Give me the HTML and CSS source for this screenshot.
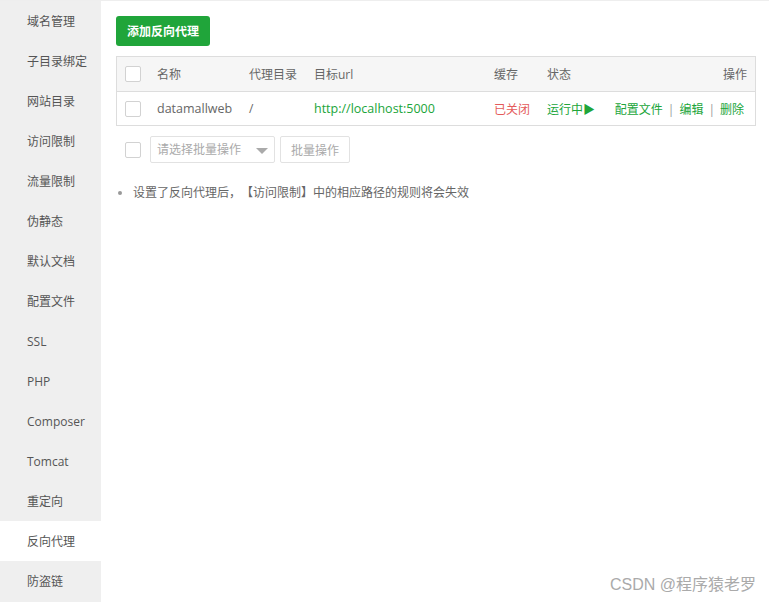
FILE: index.html
```html
<!DOCTYPE html>
<html lang="zh-CN">
<head>
<meta charset="utf-8">
<title>反向代理</title>
<link rel="stylesheet" href="styles.css">
</head>
<body>
<div class="page">
  <ul class="side">
    <li class="side-item">域名管理</li>
    <li class="side-item">子目录绑定</li>
    <li class="side-item">网站目录</li>
    <li class="side-item">访问限制</li>
    <li class="side-item">流量限制</li>
    <li class="side-item">伪静态</li>
    <li class="side-item">默认文档</li>
    <li class="side-item">配置文件</li>
    <li class="side-item">SSL</li>
    <li class="side-item">PHP</li>
    <li class="side-item">Composer</li>
    <li class="side-item">Tomcat</li>
    <li class="side-item">重定向</li>
    <li class="side-item active">反向代理</li>
    <li class="side-item">防盗链</li>
  </ul>
  <div class="main">
    <button class="btn-add">添加反向代理</button>
    <div class="table">
      <div class="row head">
        <div class="cell cb-cell"><span class="cb"></span></div>
        <div class="cell">名称</div>
        <div class="cell">代理目录</div>
        <div class="cell">目标url</div>
        <div class="cell">缓存</div>
        <div class="cell">状态</div>
        <div class="cell ops">操作</div>
      </div>
      <div class="row body">
        <div class="cell cb-cell"><span class="cb"></span></div>
        <div class="cell name">datamallweb</div>
        <div class="cell">/</div>
        <div class="cell green url">http://localhost:5000</div>
        <div class="cell red">已关闭</div>
        <div class="cell green">运行中▶</div>
        <div class="cell ops body-ops green">配置文件<span class="sep">|</span>编辑<span class="sep">|</span>删除</div>
      </div>
    </div>
    <div class="batch">
      <span class="cb"></span>
      <div class="select">请选择批量操作<span class="arrow"></span></div>
      <button class="btn-batch">批量操作</button>
    </div>
    <ul class="notes">
      <li>设置了反向代理后，【访问限制】中的相应路径的规则将会失效</li>
    </ul>
  </div>
  <div class="watermark">CSDN @程序猿老罗</div>
</div>
</body>
</html>
```

FILE: styles.css
```css
* { box-sizing: border-box; }
html, body { margin: 0; padding: 0; }
body {
  font-family: "Open Sans", "Noto Sans CJK SC", sans-serif;
  font-size: 12px;
  color: #666;
  background: #fff;
  text-spacing-trim: space-all;
}
.page {
  position: relative;
  display: flex;
  height: 602px;
  border-top: 1px solid #eee;
  overflow: hidden;
}
.side {
  list-style: none;
  margin: 0;
  padding: 0;
  width: 101px;
  flex: none;
  background: #efefef;
}
.side-item {
  height: 40px;
  line-height: 40px;
  padding-top: 1px;
  padding-left: 27px;
  color: #555;
}
.side-item.active { background: #fff; }
.main {
  flex: 1;
  padding: 15px 13px 0 15px;
}
.btn-add {
  display: block;
  height: 30px;
  width: 94px;
  border: 0;
  border-radius: 3px;
  background: #20a53a;
  color: #fff;
  font-family: inherit;
  font-size: 12px;
  font-weight: bold;
  padding: 0;
}
.table {
  margin-top: 10px;
  border: 1px solid #ddd;
  width: 640px;
}
.row {
  display: grid;
  grid-template-columns: 40px 92px 65px 180px 53px 66px 1fr;
  align-items: center;
}
.row.head { background: #f6f6f6; border-bottom: 1px solid #ddd; height: 35px; }
.row.body { height: 33px; }
.cell { white-space: nowrap; }
.cb-cell { padding-left: 8px; display: flex; align-items: center; }
.cb {
  display: inline-block;
  width: 16px;
  height: 16px;
  border: 1px solid #d2d2d2;
  border-radius: 2px;
  background: #fff;
}
.ops { text-align: right; padding-right: 8px; }
.row .body-ops { padding-right: 11px; }
.green { color: #20a53a; }
.url { font-size: 12.5px; }
.red { color: #e45a5a; }
.name { color: #666; font-size: 12.5px; }
.sep { color: #999; margin: 0 5px; }
.batch {
  display: flex;
  align-items: center;
  margin-top: 10px;
  padding-left: 9px;
}
.batch .cb { margin-right: 9px; }
.select {
  position: relative;
  width: 125px;
  height: 27px;
  line-height: 25px;
  border: 1px solid #e2e2e2;
  border-radius: 2px;
  padding-left: 6px;
  color: #aaa;
}
.arrow {
  position: absolute;
  right: 6px;
  top: 11px;
  border-left: 6px solid transparent;
  border-right: 6px solid transparent;
  border-top: 6px solid #aaa;
}
.btn-batch {
  margin-left: 5px;
  width: 70px;
  height: 27px;
  border: 1px solid #e2e2e2;
  border-radius: 2px;
  background: #fff;
  color: #aaa;
  font-family: inherit;
  font-size: 12px;
  padding: 0;
}
.notes {
  margin: 21px 0 0;
  padding-left: 17px;
  color: #666;
  line-height: 18px;
}
.notes li::marker { color: #999; }
.watermark {
  position: absolute;
  right: 13px;
  bottom: 7px;
  font-family: "Liberation Sans", "Noto Sans CJK SC", sans-serif;
  font-size: 16px;
  color: #aaa;
}
```
